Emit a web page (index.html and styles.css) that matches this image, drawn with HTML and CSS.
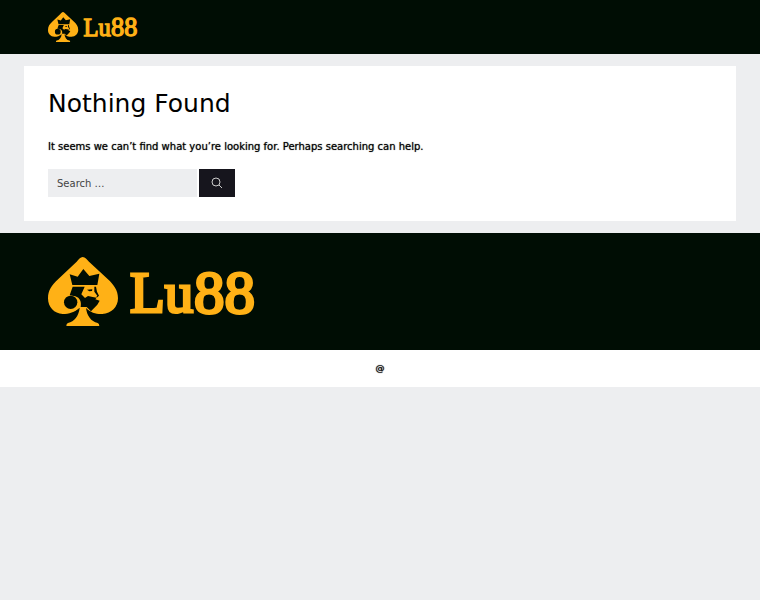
FILE: index.html
```html
<!DOCTYPE html>
<html lang="en">
<head>
    <meta charset="UTF-8">
    <meta name="viewport" content="width=device-width, initial-scale=1.0">
    <title>Nothing Found - Lu88</title>
    <link rel="stylesheet" href="styles.css">
</head>
<body>
    <svg class="sprite" aria-hidden="true">
        <symbol id="logo" viewBox="0 0 206 69">
            <g transform="scale(0.3333) translate(-24 -21)">
                <path class="logo-gold" d="M128 21 C121 22 116 28 110 35 L55 87 C35 106 24 120 24 145 C24 172 43 191 68 192 C87 192 104 187 119 174 C116 198 103 215 84 219 Q79 221 79 228 H178 Q178 221 173 219 C153 214 141 198 138 174 C152 188 169 193 187 192 C214 191 234 171 234 145 C234 120 221 104 203 87 L147 35 C140 28 136 22 128 21 Z"/>
                <path class="logo-dark" d="M89 73 L113 80 L130 57 L148 78 L178 71 L172 105 H97 Z"/>
                <circle class="logo-dark" cx="92" cy="157" r="20"/>
                <path class="logo-dark" d="M98 110 H134 L124 133 L135 144 L144 138 L158 141 L170 143 L166 148 L179 152 L172 164 L153 184 L140 171 L122 171 C125 156 120 143 106 139 L89 136 Z"/>
                <path class="logo-dark" d="M163 110 H168 L171 125 L177 137 L172 142 L168 142 L172 137 L163 125 Z"/>
                <path class="logo-dark" d="M141 119 L157 118 L156 123 L148 124 Z"/>
                <path class="logo-dark" d="M120 173 C113 176 108 185 96 190 C104 188 109 184 114 178 Z"/>
            </g>
            <text class="logo-text" x="82" y="55">Lu</text>
            <text class="logo-text logo-digits" x="146" y="56">88</text>
        </symbol>
    </svg>

    <header class="site-header">
        <a href="#" aria-label="Lu88 home">
            <svg class="logo logo-small" viewBox="0 0 206 69"><use href="#logo" width="206" height="69"/></svg>
        </a>
    </header>

    <main class="site-content">
        <section class="no-results">
            <h1>Nothing Found</h1>
            <p>It seems we can’t find what you’re looking for. Perhaps searching can help.</p>
            <form class="search-form">
                <input type="search" name="s" placeholder="Search …" aria-label="Search for:">
                <button type="submit" aria-label="Search">
                    <svg class="search-icon" viewBox="0 0 12 12">
                        <circle cx="5" cy="5" r="4"/>
                        <path d="M8 8 L11 11"/>
                    </svg>
                </button>
            </form>
        </section>
    </main>

    <footer>
        <div class="footer-widgets">
            <svg class="logo" viewBox="0 0 206 69" role="img" aria-label="Lu88"><use href="#logo" width="206" height="69"/></svg>
        </div>
        <div class="site-info">@</div>
    </footer>
</body>
</html>
```
FILE: styles.css
```css
* {
    margin: 0;
    padding: 0;
    box-sizing: border-box;
}

body {
    font-family: "DejaVu Sans", sans-serif;
    font-size: 10px;
    line-height: 16px;
    color: #000;
    background: #edeef0;
}

.sprite {
    position: absolute;
    width: 0;
    height: 0;
}

.site-header {
    padding: 12px 48px;
    background: #000d04;
}

.logo,
#logo {
    overflow: visible;
}

.logo {
    display: block;
    width: 206px;
    height: 69px;
}

.logo-small {
    width: 89px;
    height: 30px;
}

.logo-gold {
    fill: #ffb116;
}

.logo-dark {
    fill: #000d04;
}

.logo-text {
    font-family: "Liberation Serif", serif;
    font-size: 57px;
    fill: #ffb116;
    stroke: #ffb116;
    stroke-width: 3px;
}

.logo-digits {
    font-size: 61px;
}

.site-content {
    padding: 12px 24px;
}

.no-results {
    padding: 24px;
    background: #fff;
}

h1 {
    margin-bottom: 21px;
    font-size: 25px;
    font-weight: 400;
    line-height: 28px;
}

.no-results p {
    margin-bottom: 14px;
    text-shadow: 0 0 1px rgba(0, 0, 0, 0.7);
}

.search-form {
    display: flex;
    gap: 2px;
}

.search-form input {
    width: 149px;
    height: 28px;
    padding: 0 9px;
    border: none;
    font: inherit;
    color: #444;
    background: #edeef0;
}

.search-form input::placeholder {
    color: #444;
}

.search-form button {
    display: flex;
    align-items: center;
    justify-content: center;
    width: 36px;
    height: 28px;
    border: none;
    background: #16151d;
    cursor: pointer;
}

.search-icon {
    width: 12px;
    height: 12px;
    fill: none;
    stroke: #ccc;
    stroke-width: 1px;
}

.footer-widgets {
    padding: 24px 48px;
    background: #000d04;
}

.site-info {
    padding: 10px 24px 11px;
    font-size: 9px;
    text-align: center;
    text-shadow: 0 0 1px #000;
    background: #fff;
}
```
